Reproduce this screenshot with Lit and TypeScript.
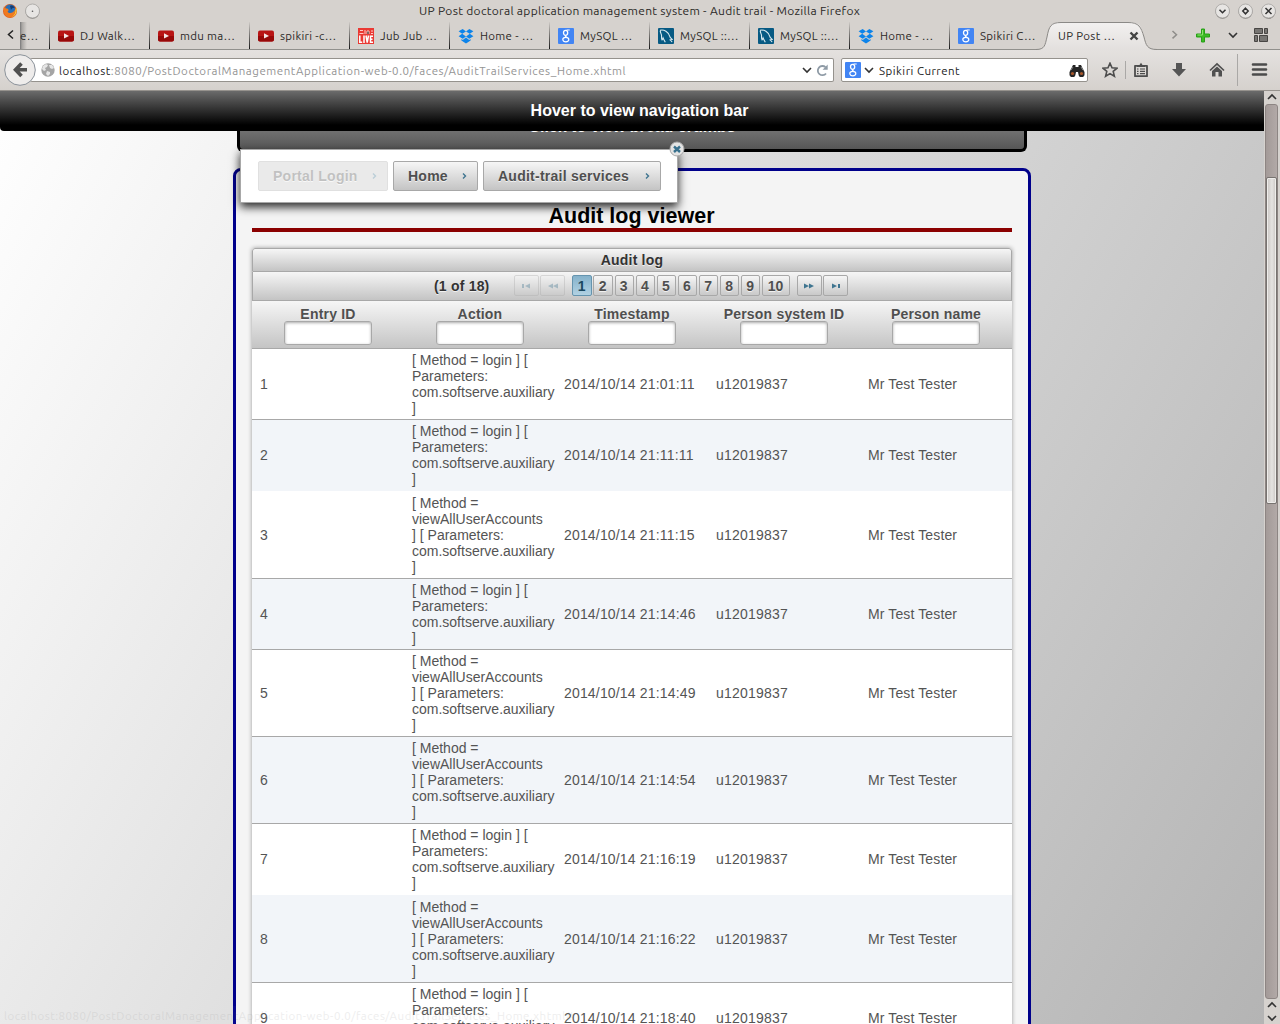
import { LitElement, html, css, svg, nothing } from "lit";
import { customElement, property } from "lit/decorators.js";
import { classMap } from "lit/directives/class-map.js";

const youtube = svg`<rect x="0" y="2.5" width="16" height="11" rx="2" fill="#b81414"/><path d="M0 8h16v3.5a2 2 0 0 1-2 2H2a2 2 0 0 1-2-2z" fill="#970909"/><path d="M6 5.2v5.4L11 8z" fill="#f4e6e6"/>`;
const google = svg`<rect width="16" height="16" rx="1" fill="#4285f4"/><g fill="none" stroke="#fff"><ellipse cx="7.6" cy="4.8" rx="2.1" ry="2.5" stroke-width="1.3"/><path d="M8.5 2h3.2M7.6 7.3c-.8 1 .2 1.4 1.3 1.9" stroke-width="1.1"/><ellipse cx="7.8" cy="11.6" rx="3" ry="2.2" stroke-width="1.2"/></g>`;
const dropbox = svg`<path d="M4.7 1 8 3.4 4.2 5.8 .6 3.2zM11.3 1 8 3.4l3.8 2.4 3.6-2.6zM.6 8.2 4.2 5.8 8 8.6 4.8 10.8zM15.4 8.2l-3.6-2.4L8 8.6l3.2 2.2zM8 9.5l3.2 2.4 1.4-.9v1.6L8 15.6l-4.6-3V11l1.4.9z" fill="#0d84ea"/>`;
const mysql = svg`<rect width="16" height="16" rx="1" fill="#075a83"/><path d="M2 2.300c4-1 8.500 1.500 10 6.500.2 1.200 1.600 1.600 2.200 2.600-.7.200-1.500 0-2.200.5.900.8 1.700 1.200 2 2.200M2.200 2.600c.2 2 .8 2.800 1.300 4.500.2 1.500-.4 3 .6 4.800.6-.5.800-1.300 1-2 .6 1.600 1.400 2.800 2.200 4.300" fill="none" stroke="#dcebf0" stroke-width="1.100"/>`;
const live = svg`<rect width="16" height="16" fill="#ea3933"/><path d="M2 2.5h3M1.5 5.5h4M7 2v4M9 6V3h2v3M13 3h2M13 5.5h2" stroke="#ffc9c5"/><g fill="none" stroke="#fff" stroke-width="1.5"><path d="M1.8 7.5v6.7h2.400M6 7.5V15M8 7.5l1.2 7 1.3-7M15 8.2h-2.5v6h2.500M12.5 11.2h2"/></g>`;

const icons: Record<string, unknown> = { youtube, google, dropbox, mysql, live };

type Tab = { icon: string; label: string };
const tabs: Tab[] = [
  { icon: "youtube", label: "DJ Walk…" },
  { icon: "youtube", label: "mdu ma…" },
  { icon: "youtube", label: "spikiri -c…" },
  { icon: "live", label: "Jub Jub …" },
  { icon: "dropbox", label: "Home - …" },
  { icon: "google", label: "MySQL …" },
  { icon: "mysql", label: "MySQL ::…" },
  { icon: "mysql", label: "MySQL ::…" },
  { icon: "dropbox", label: "Home - …" },
  { icon: "google", label: "Spikiri C…" },
];

const login = ["[ Method = login ] [", "Parameters:", "com.softserve.auxiliary", "]"];
const view = ["[ Method =", "viewAllUserAccounts", "] [ Parameters:", "com.softserve.auxiliary", "]"];

type Row = { id: number; action: string[]; time: string; height: number; line: boolean };
const rows: Row[] = [
  { id: 1, action: login, time: "2014/10/14 21:01:11", height: 71, line: true },
  { id: 2, action: login, time: "2014/10/14 21:11:11", height: 71, line: false },
  { id: 3, action: view, time: "2014/10/14 21:11:15", height: 88, line: true },
  { id: 4, action: login, time: "2014/10/14 21:14:46", height: 71, line: true },
  { id: 5, action: view, time: "2014/10/14 21:14:49", height: 87, line: true },
  { id: 6, action: view, time: "2014/10/14 21:14:54", height: 87, line: true },
  { id: 7, action: login, time: "2014/10/14 21:16:19", height: 71, line: false },
  { id: 8, action: view, time: "2014/10/14 21:16:22", height: 88, line: true },
  { id: 9, action: login, time: "2014/10/14 21:18:40", height: 71, line: true },
];

const chromeFont = css`"Ubuntu", "Noto Sans", "Open Sans", sans-serif`;

@customElement("browser-tabs")
class BrowserTabs extends LitElement {
  static styles = css`
    :host { display: block; height: 50px; font: 11.5px/14px ${chromeFont}; color: #2b2927; letter-spacing: 0.3px; }
    .title { height: 22px; display: flex; align-items: center; padding: 0 4px 0 2px; }
    .title svg { flex: none; }
    .caption { flex: 1; text-align: center; white-space: nowrap; font-size: 12px; letter-spacing: 0.3px; padding-left: 1px; }
    .left { display: flex; gap: 7px; width: 80px; }
    .right { display: flex; justify-content: flex-end; gap: 8px; width: 80px; }
    .strip { display: flex; height: 28px; box-sizing: border-box; border-bottom: 1px solid #91908c; }
    .back { width: 20px; padding: 6px 0 0 5px; box-sizing: border-box; }
    .cut { width: 30px; box-sizing: border-box; padding: 7px 0 0 0; overflow: hidden; background: linear-gradient(90deg, #777 0, #a9a6a3 2px, #d6d2ce 7px); border-right: 1px solid #000; border-image: linear-gradient(#d6d2ce, #111) 1; }
    .tab { width: 100px; box-sizing: border-box; display: flex; gap: 6px; padding: 6px 0 0 8px; white-space: nowrap; overflow: hidden; border-right: 1px solid #000; border-image: linear-gradient(#d6d2ce, #111) 1; }
    .tab.last { border: 0; width: 90px; }
    .tab svg { flex: none; }
    .tab span { padding-top: 1px; }
    .active { width: 123px; height: 29px; flex: none; display: grid; margin-left: -4px; }
    .active > * { grid-area: 1 / 1; }
    .inner { display: flex; justify-content: space-between; padding: 7px 20px 0 22px; }
    .inner svg { margin-top: 2px; }
    .tools { flex: 1; display: flex; justify-content: space-between; padding: 6px 11px 0 12px; }
  `;
  knob(glyph: unknown) {
    return html`<svg width="15" height="17" viewBox="0 0 15 17"><circle cx="7.5" cy="8.800" r="7" fill="#827f7c"/><circle cx="7.5" cy="8" r="7" fill="#e7e5e3" stroke="#a5a29f" stroke-width=".8"/><g transform="translate(0 -.8)">${glyph}</g></svg>`;
  }
  render() {
    return html`
      <div class="title">
        <div class="left">
          <svg width="16" height="16" viewBox="0 0 16 16"><circle cx="8" cy="8" r="7" fill="#e2601c"/><circle cx="8.2" cy="6.4" r="5" fill="#286fb7"/><path d="M8 3c2-1 4 0 5 2-2-.5-3 .5-4 2z" fill="#143c74"/><path d="M2 3c0 2 1 2 3 2.5C7 6 7 8 5.5 8.5 7 11 11 10.5 12.8 7c.8 4-1.8 7.4-5 7.4C3.5 14.4.4 9.5 2 3z" fill="#ef7a20"/><path d="M14.3 4.5c1.2 4-.7 8.5-4.6 9.6 3-2 4-5 3.6-7.200z" fill="#f8d33c"/></svg>
          ${this.knob(svg`<circle cx="7.5" cy="9" r=".8" fill="#555"/>`)}
        </div>
        <div class="caption">UP Post doctoral application management system - Audit trail - Mozilla Firefox</div>
        <div class="right">
          ${this.knob(svg`<path d="M4.5 7.5l3 3 3-3" fill="none" stroke="#333" stroke-width="1.5"/>`)}
          ${this.knob(svg`<path d="M7.5 6l2.7 2.8-2.7 2.8-2.7-2.8z" fill="none" stroke="#333" stroke-width="1.5"/>`)}
          ${this.knob(svg`<path d="M4.5 5.8l6 6m0-6l-6 6" stroke="#333" stroke-width="1.5"/>`)}
        </div>
      </div>
      <div class="strip">
        <div class="back"><svg width="11" height="13" viewBox="0 0 11 13"><path d="M8 2.5L3.5 6.5 8 10.5" fill="none" stroke="#222" stroke-width="1.5"/></svg></div>
        <div class="cut">e…</div>
        ${tabs.map((t, i) => html`<div class=${classMap({ tab: true, last: i === tabs.length - 1 })}>
          <svg width="16" height="16" viewBox="0 0 16 16">${icons[t.icon]}</svg><span>${t.label}</span></div>`)}
        <div class="active">
          <svg width="123" height="29" viewBox="0 0 123 29"><defs><linearGradient id="a" x2="0" y2="1"><stop stop-color="#f3f1f0"/><stop offset="1" stop-color="#e2dfdd"/></linearGradient></defs><path d="M0 27.5C9 27.5 9 23 11 15 13 5 14 0 25 0h67c12 0 14 5 16 15 2 8 3 12.500 13 12.500V29H0z" fill="url(#a)"/><path d="M0 27.500C9 27.500 9 23 11 15 13 4 15 .5 25 .5h67c11 0 13 4.500 16 14.500 2 8 3 12.500 13 12.500" fill="none" stroke="#8b8986"/></svg>
          <div class="inner"><span>UP Post …</span><svg width="10" height="10" viewBox="0 0 10 10"><path d="M1.500 1.500l7 7m0-7l-7 7" stroke="#444" stroke-width="2.400"/></svg></div>
        </div>
        <div class="tools">
          <svg width="8" height="14" viewBox="0 0 8 14"><path d="M1.500 3L5.500 6.700l-4 3.700" fill="none" stroke="#8f8d8a" stroke-width="1.500"/></svg>
          <svg width="16" height="16" viewBox="0 0 16 16"><path d="M6.500 1h3v5h5v3h-5v5h-3V9h-5V6h5z" fill="#3dba25" stroke="#27a016" stroke-linejoin="round"/><path d="M7.500 2v5H2.500" fill="none" stroke="#8be36c"/></svg>
          <svg width="10" height="14" viewBox="0 0 10 14"><path d="M1 5l4 4 4-4" fill="none" stroke="#333" stroke-width="1.600"/></svg>
          <svg width="15" height="16" viewBox="0 0 15 16"><g fill="#777572" stroke="#484644"><path d="M.5.500h8v5h-8zM10.500.500h3v5h-3zM.5 7.500h3v6h-3zM5.500 7.500h8v6h-8z"/></g></svg>
        </div>
      </div>`;
  }
}

@customElement("browser-toolbar")
class BrowserToolbar extends LitElement {
  static styles = css`
    :host { display: flex; box-sizing: border-box; height: 41px; padding: 4px 11px 4px 4px; align-items: center; background: linear-gradient(#e4e1df, #d5d1cd); border-bottom: 1px solid #96928d; font: 11.5px/14px ${chromeFont}; color: #222; }
    svg { flex: none; }
    .back { position: relative; margin-right: -6px; }
    .field { display: flex; align-items: center; height: 24px; box-sizing: border-box; background: #fff; border: 1px solid #95928d; border-radius: 2px; white-space: nowrap; }
    .url { width: 804px; padding: 0 4px 0 11px; gap: 4px; color: #949494; border-left: 0; letter-spacing: 0.56px; }
    .url b { font-weight: 400; color: #222; }
    .url .text { flex: 1; padding-top: 1px; }
    .search { width: 247px; margin-left: 7px; padding: 0 2px 0 3px; gap: 3px; letter-spacing: 0.5px; }
    .search .text { flex: 1; padding: 1px 0 0 2px; }
    .buttons { flex: 1; display: flex; align-items: center; padding-left: 14px; }
    .sep { width: 1px; height: 18px; background: #aaa8a6; margin: 0 7px; }
    .tall { height: 32px; margin: 0 13px 0 12px; }
    .gap { margin-left: 22px; }
  `;
  render() {
    return html`
      <svg class="back" width="32" height="32" viewBox="0 0 32 32"><circle cx="16" cy="16" r="15.300" fill="#eeeceb" stroke="#8b929a"/><path d="M17.500 9.500L11.500 15.800l6 6.300M12 15.800H23" fill="none" stroke="#505050" stroke-width="3.600"/></svg>
      <div class="field url">
        <svg width="14" height="14" viewBox="0 0 14 14"><circle cx="7" cy="7" r="6.700" fill="#a5a5a5"/><path d="M2 3l3-2 2 1-1 2-2 1 1 2-2 1-2-2zM8 2l3 0 2 3-2 1-2-1zM6 8l3 1 0 2-2 2-2-2z" fill="#e6e6e6"/></svg>
        <span class="text"><b>localhost</b>:8080/PostDoctoralManagementApplication-web-0.0/faces/AuditTrailServices_Home.xhtml</span>
        <svg width="10" height="10" viewBox="0 0 10 10"><path d="M1 3l4 4 4-4" fill="none" stroke="#333" stroke-width="1.600"/></svg>
        <svg width="13" height="13" viewBox="0 0 13 13"><path d="M10 9.500A4.600 4.600 0 1 1 9.500 3.200" fill="none" stroke="#8f9ba6" stroke-width="1.800"/><path d="M11.700.6v5.200H6.600z" fill="#8f9ba6"/></svg>
      </div>
      <div class="field search">
        <svg width="16" height="16" viewBox="0 0 16 16">${google}</svg>
        <svg width="10" height="10" viewBox="0 0 10 10"><path d="M1 3l4 4 4-4" fill="none" stroke="#333" stroke-width="1.600"/></svg>
        <span class="text">Spikiri Current</span>
        <svg width="16" height="13" viewBox="0 0 16 13"><path d="M4 1h2.500v2h3V1H12l3.500 7v2a3 3 0 0 1-6 .5L9 8H7l-.5 2.500a3 3 0 0 1-6-.5V8z" fill="#252525"/><circle cx="3.500" cy="9.500" r="1.600" fill="#a8572a"/><circle cx="12.500" cy="9.500" r="1.600" fill="#a8572a"/><path d="M4 3L2 6M12 3l2 3" stroke="#888"/></svg>
      </div>
      <div class="buttons">
        <svg width="16" height="16" viewBox="0 0 16 16"><path d="M8 1.200l2 4.600 5 .4-3.800 3.200 1.200 4.900L8 11.600l-4.400 2.700 1.200-4.900L1 6.200l5-.4z" fill="none" stroke="#4d4d4d" stroke-width="1.600"/></svg>
        <div class="sep"></div>
        <svg width="16" height="16" viewBox="0 0 16 16"><path d="M2 3.800h12v10.400H2z" fill="none" stroke="#4d4d4d" stroke-width="1.800" stroke-linejoin="round"/><path d="M4 3h2.500L8 .8 9.500 3H12v2H4z" fill="#4d4d4d"/><path d="M4 7h1.500M7 7h5M4 9.300h1.500M7 9.300h5M4 11.600h1.500M7 11.600h5" stroke="#4d4d4d" stroke-width="1.200"/></svg>
        <svg class="gap" width="16" height="16" viewBox="0 0 16 16"><path d="M5 1h6v6h4l-7 7.500L1 7h4z" fill="#555"/></svg>
        <svg class="gap" width="16" height="16" viewBox="0 0 16 16"><path d="M1 8.500L8 2l7 6.500" fill="none" stroke="#505050" stroke-width="1.700"/><path d="M3 9l5-4.600L13 9v5.500H9.500V10h-3v4.500H3z" fill="#505050"/></svg>
        <div class="sep tall"></div>
        <svg width="17" height="16" viewBox="0 0 17 16"><path d="M2 2.500h13M2 7.500h13M2 12.500h13" stroke="#4b4b4b" stroke-width="2.600" stroke-linecap="round"/></svg>
      </div>`;
  }
}

@customElement("page-scrollbar")
class PageScrollbar extends LitElement {
  static styles = css`
    :host { display: flex; flex-direction: column; align-items: center; width: 16px; flex: none; background: #d6d2ce; }
    .arrow { height: 13px; flex: none; }
    .track { flex: 1; width: 13px; margin-right: 1px; box-sizing: border-box; border: 1px solid #8d8583; border-radius: 3px; background: linear-gradient(90deg, #a39a98, #b2a9a7); padding-top: 72px; }
    .thumb { height: 327px; box-sizing: border-box; border: 1px solid #777370; border-radius: 2px; background: linear-gradient(90deg, #c9c5c2, #e5e3e1 55%, #c9c5c2); box-shadow: inset 0 0 0 1px #efedeb; }
    .tail { height: 25px; flex: none; display: flex; flex-direction: column; }
  `;
  arrow(down = false) {
    return html`<svg class="arrow" width="12" height="13" viewBox="0 0 12 13"><path d=${down ? "M2 4l4 4 4-4" : "M2 8l4-4 4 4"} fill="none" stroke="#333" stroke-width="1.600"/></svg>`;
  }
  render() {
    return html`${this.arrow()}<div class="track"><div class="thumb"></div></div><div class="tail">${this.arrow()}${this.arrow(true)}</div>`;
  }
}

@customElement("crumb-panel")
class CrumbPanel extends LitElement {
  static styles = css`
    :host { display: flex; gap: 5px; box-sizing: border-box; width: 438px; height: 54px; padding: 11px 16px 11px 17px; background: #fff; border: 1px solid #a8a8a8; box-shadow: 0 4px 9px rgba(0, 0, 0, 0.85); font: bold 14px/16px "Liberation Sans", sans-serif; letter-spacing: 0.25px; color: #4f4f4f; }
    .crumb { display: flex; align-items: center; justify-content: space-between; flex: none; height: 30px; box-sizing: border-box; padding: 0 10px 0 14px; border: 1px solid #a8a8a8; border-radius: 2px; background: linear-gradient(#f6f6f6, #c4c4c4); text-shadow: 0 1px 0 rgba(255, 255, 255, 0.7); white-space: nowrap; }
    .login { width: 130px; opacity: 0.35; background: #c4c4c4; }
    .home { width: 85px; }
    .audit { width: 178px; }
    .close { position: absolute; right: -8px; top: -9px; }
  `;
  chevron = html`<svg width="5" height="8" viewBox="0 0 5 8"><path d="M1 1.500L3.500 4 1 6.500" fill="none" stroke="#3f7590" stroke-width="1.400"/></svg>`;
  render() {
    return html`
      <div class="crumb login"><span>Portal Login</span>${this.chevron}</div>
      <div class="crumb home"><span>Home</span>${this.chevron}</div>
      <div class="crumb audit"><span>Audit-trail services</span>${this.chevron}</div>
      <svg class="close" width="16" height="16" viewBox="0 0 16 16"><circle cx="8" cy="8" r="7" fill="#e3e3e3" stroke="#a8a8a8"/><path d="M5 5.500l6 5.500m0-5.500L5 11" stroke="#38708d" stroke-width="2.400"/></svg>`;
  }
}

@customElement("audit-table")
class AuditTable extends LitElement {
  static styles = css`
    :host { display: block; font: 14px/16px "Liberation Sans", sans-serif; color: #545454; letter-spacing: 0; box-shadow: 0 0 4px #999; border-radius: 3px 3px 0 0; background: #fff; }
    .bar { box-sizing: border-box; border: 1px solid #a8a8a8; background: linear-gradient(#f6f6f6, #c4c4c4); color: #4f4f4f; font-weight: bold; font-size: 14px; letter-spacing: 0.2px; text-shadow: 0 1px 0 rgba(255, 255, 255, 0.7); }
    .bar.caption { height: 24px; line-height: 22px; text-align: center; border-radius: 3px 3px 0 0; color: #333; }
    .pager { height: 29px; border-top: 0; display: flex; align-items: center; padding-left: 181px; padding-bottom: 1px; }
    .count { width: 80px; color: #333; letter-spacing: 0.2px; padding-top: 1px; }
    .set { display: flex; gap: 1.500px; }
    .pages { gap: 1.700px; margin: 0 7px 0 7.500px; }
    .btn { box-sizing: border-box; width: 19.400px; height: 21px; line-height: 20px; text-align: center; letter-spacing: 0; text-indent: -1px; border: 1px solid #a8a8a8; border-radius: 2px; background: linear-gradient(#f6f6f6, #c9c9c9); }
    .btn.arrow { width: 24.700px; display: grid; place-items: center; }
    .btn.ten { width: 28px; }
    .btn.on { background: linear-gradient(#85b2cb, #b1d1e2); border-color: #6594ae; color: #1b485e; text-shadow: none; }
    .btn.off { opacity: 0.35; }
    .heads { display: grid; grid-template-columns: repeat(5, 152px); height: 48px; border-width: 0 0 1px; }
    .head { text-align: center; padding-top: 5px; white-space: nowrap; }
    .box { width: 88px; height: 24px; box-sizing: border-box; margin: -1px auto 0; background: #fff; border: 1px solid #a8a8a8; border-radius: 3px; box-shadow: inset 0 1px 3px #aaa; }
    .row { display: grid; grid-template-columns: repeat(5, 152px); align-items: center; box-sizing: border-box; white-space: nowrap; padding-bottom: 1px; }
    .row.even { background: #f2f5f9; }
    .row.line { border-bottom: 1px solid #a8a8a8; padding-bottom: 0; }
    .row.tall { padding-top: 1px; }
    .cell { padding-left: 8px; }
    .cell.time { letter-spacing: 0.17px; }
    .cell.user { letter-spacing: 0.2px; }
    .cell.name { letter-spacing: 0.12px; }
  `;
  arrow(path: string, off: boolean) {
    return html`<div class=${classMap({ btn: true, arrow: true, off })}><svg width="10" height="6" viewBox="0 0 10 6"><path d=${path} fill="#3f7590"/></svg></div>`;
  }
  render() {
    const pages = [1, 2, 3, 4, 5, 6, 7, 8, 9, 10];
    return html`
      <div class="bar caption">Audit log</div>
      <div class="bar pager">
        <div class="count">(1 of 18)</div>
        <div class="set">${this.arrow("M1 1h2v4H1zM9 .5v5L4 3z", true)}${this.arrow("M5 .5v5L0 3zM10 .5v5L5 3z", true)}</div>
        <div class="set pages">${pages.map((p) => html`<div class=${classMap({ btn: true, on: p === 1, ten: p === 10 })}>${p}</div>`)}</div>
        <div class="set">${this.arrow("M0 .5v5L5 3zM5 .5v5L10 3z", false)}${this.arrow("M1 .5v5L6 3zM7 1h2v4H7z", false)}</div>
      </div>
      <div class="bar heads">
        ${["Entry ID", "Action", "Timestamp", "Person system ID", "Person name"].map((h) => html`<div class="head">${h}<div class="box"></div></div>`)}
      </div>
      ${rows.map((r) => html`<div class=${classMap({ row: true, even: r.id % 2 === 0, line: r.line, tall: r.height === 88 })} style="height:${r.height}px">
        <div class="cell">${r.id}</div>
        <div class="cell">${r.action.map((l, i) => html`${i ? html`<br />` : nothing}${l}`)}</div>
        <div class="cell time">${r.time}</div>
        <div class="cell user">u12019837</div>
        <div class="cell name">Mr Test Tester</div>
      </div>`)}`;
  }
}

@customElement("app-root")
class AppRoot extends LitElement {
  @property() heading = "Audit log viewer";
  static styles = css`
    :host { display: flex; flex-direction: column; width: 1280px; height: 1024px; overflow: hidden; background: #d6d2ce; }
    .view { flex: 1; min-height: 0; display: flex; }
    .page { position: relative; width: 1264px; overflow: hidden; background: linear-gradient(118.7deg, #fff, #b4b4b4); font-family: "Liberation Sans", sans-serif; }
    .nav { position: absolute; inset: 0 0 auto 0; height: 40px; border-radius: 0 0 0 4px; background: linear-gradient(#6b6b6b, #000 85%); color: #fff; font: bold 16px/39px "Liberation Sans", sans-serif; text-align: center; text-indent: 15px; z-index: 2; }
    .crumbs { width: 790px; height: 61px; box-sizing: border-box; margin: 0 auto; border: 3px solid #000; border-top: 0; border-radius: 0 0 6px 6px; background: linear-gradient(#aaa, #565656); color: #fff; font: bold 16px/18px "Liberation Sans", sans-serif; text-align: center; padding-top: 27px; }
    .panel { width: 798px; height: 900px; box-sizing: border-box; margin: 16px auto 0; padding: 31px 16px 0; border: 3px solid #00008b; border-radius: 8px; background: #f4f4f4; }
    .heading { height: 30px; box-sizing: border-box; border-bottom: 4px solid #8b0000; margin-bottom: 16px; text-align: center; font: bold 21.500px/29px "Liberation Sans", sans-serif; color: #000; text-indent: -1px; }
    .float { position: absolute; left: 240px; top: 58px; z-index: 1; }
    .status { position: absolute; left: 0; bottom: 0; padding: 2px 4px 1px; font: 11.500px/15px ${chromeFont}; letter-spacing: 0.5px; color: #888; opacity: 0.14; background: rgba(255, 255, 255, 0.2); z-index: 3; }
  `;
  render() {
    return html`
      <browser-tabs></browser-tabs>
      <browser-toolbar></browser-toolbar>
      <div class="view">
        <div class="page">
          <div class="nav">Hover to view navigation bar</div>
          <div class="crumbs">Click to view bread crumbs</div>
          <div class="panel">
            <div class="heading">${this.heading}</div>
            <audit-table></audit-table>
          </div>
          <crumb-panel class="float"></crumb-panel>
          <div class="status">localhost:8080/PostDoctoralManagementApplication-web-0.0/faces/AuditTrailServices_Home.xhtml#</div>
        </div>
        <page-scrollbar></page-scrollbar>
      </div>`;
  }
}
